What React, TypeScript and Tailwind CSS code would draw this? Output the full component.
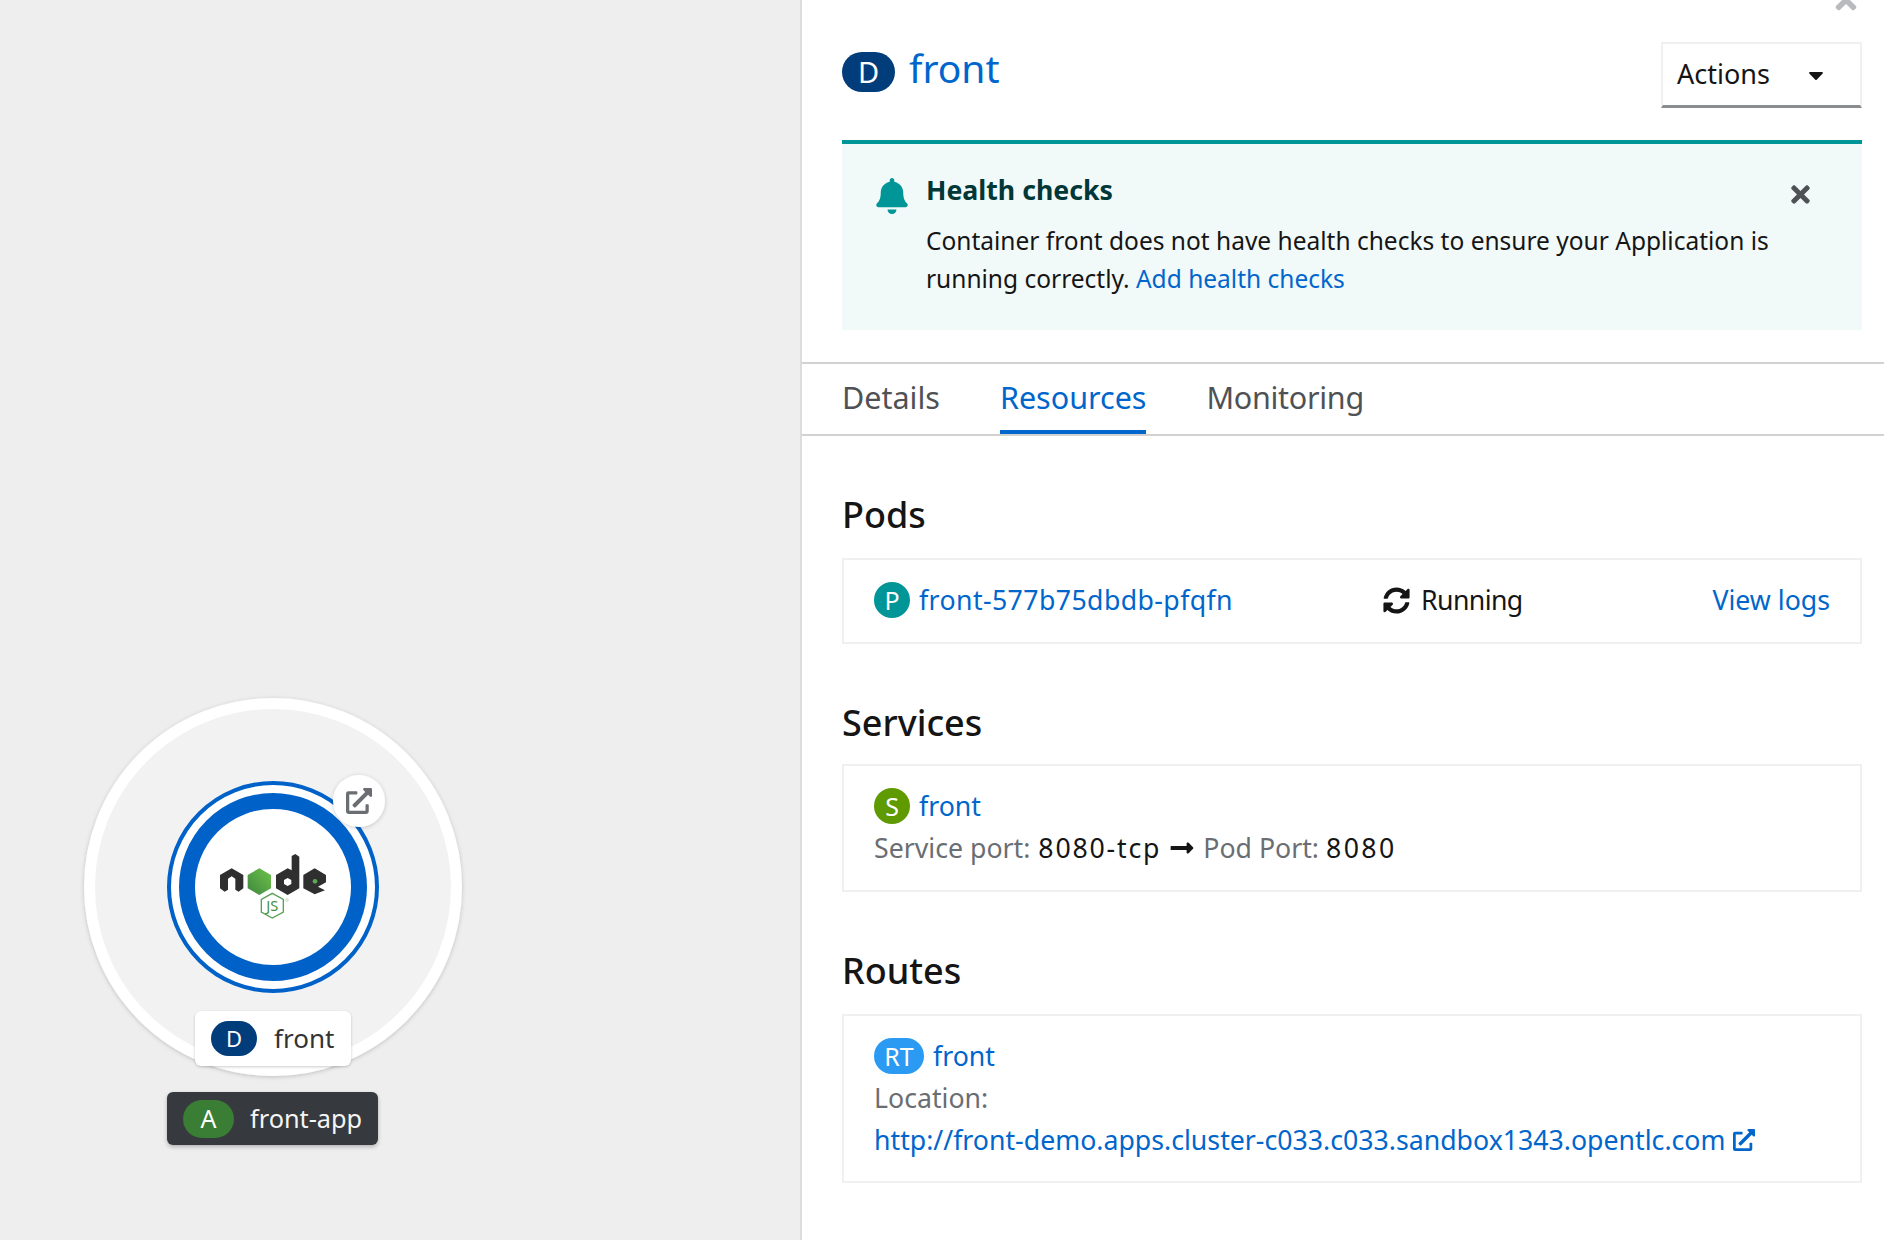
import { FaBell, FaCaretDown, FaExternalLinkAlt, FaLongArrowAltRight, FaSyncAlt, FaTimes } from 'react-icons/fa';

function Badge({ text, className }: { text: string; className: string }) {
  return (
    <span className={`flex shrink-0 items-center justify-center rounded-full text-white ${className}`}>{text}</span>
  );
}

function NodeLogo() {
  // drawn in pixels of the page, offset to the crop the logo was measured from
  return (
    <g transform="translate(190 780) scale(0.3333)">
      <defs>
        <linearGradient id="nodeHex" x1="0" y1="1" x2="1" y2="0">
          <stop offset="0" stopColor="#3f873f" />
          <stop offset="1" stopColor="#6cc24a" />
        </linearGradient>
      </defs>
      <path
        fill="#2f2f2f"
        d="M90 285 L125 265 L160 285 L160 325 L146 335 L136 329 L136 296 L125 289 L114 296 L114 329 L104 335 L90 325 Z"
      />
      <path fill="url(#nodeHex)" d="M208 265 L243 285 L243 325 L208 345 L173 325 L173 285 Z" />
      <path
        fill="#2f2f2f"
        fillRule="evenodd"
        d="M258 285 L293 265 L305 271 L305 228 L316 222 L328 230 L328 325 L293 345 L258 325 Z M293 294 L282 300 L282 312 L293 318 L304 312 L304 300 Z"
      />
      <path fill="#2f2f2f" d="M340 285 L374 265 L408 285 L408 307 L384 320 L405 331 L374 343 L340 325 Z" />
      <circle cx="375" cy="304" r="7" fill="#5ca65a" />
      <path fill="none" stroke="#5a9f54" strokeWidth="4" d="M247 340 L280 358 L280 396 L247 414 L214 396 L214 358 Z" />
      <text x="247" y="393" textAnchor="middle" fontFamily="'Noto Sans', sans-serif" fontSize="44" fill="#468f42">
        JS
      </text>
      <circle cx="291" cy="360" r="4" fill="none" stroke="#8fbf8a" strokeWidth="1.5" />
    </g>
  );
}

function Topology() {
  return (
    <div className="relative w-[800px] shrink-0 bg-[#eeeeee]">
      <svg className="absolute inset-0" width="800" height="1240" viewBox="0 0 800 1240">
        <defs>
          <filter id="soft" x="-20%" y="-20%" width="140%" height="140%">
            <feDropShadow dx="0" dy="1" stdDeviation="2" floodColor="#000" floodOpacity="0.2" />
          </filter>
        </defs>
        <circle cx="273" cy="887" r="183.5" fill="#f2f2f2" stroke="#fff" strokeWidth="11" filter="url(#soft)" />
        <circle cx="273" cy="887" r="104" fill="#fff" stroke="#0062c8" strokeWidth="4" />
        <circle cx="273" cy="887" r="86" fill="#fff" stroke="#0062c8" strokeWidth="16" />
        <NodeLogo />
        <circle cx="359" cy="801" r="26" fill="#fff" filter="url(#soft)" />
      </svg>
      <FaExternalLinkAlt className="absolute left-[346px] top-[788px] text-[26px] text-[#6a6e73]" />
      <div className="absolute left-[195px] top-[1011px] flex h-[55px] w-[156px] items-center rounded-[6px] bg-white pl-[16px] shadow-[0_1px_3px_rgba(0,0,0,0.2)]">
        <Badge text="D" className="h-[35px] w-[46px] bg-[#003d7a] text-[22px]" />
        <span className="ml-[17px] text-[26px] text-[#333]">front</span>
      </div>
      <div className="absolute left-[167px] top-[1092px] flex h-[53px] w-[211px] items-center rounded-[6px] bg-[#36393d] pl-[16px] shadow-[0_2px_4px_rgba(0,0,0,0.25)]">
        <Badge text="A" className="h-[38px] w-[51px] bg-[#3a7d34] text-[25px]" />
        <span className="ml-[16px] text-[25.3px] text-[#f5f5f5]">front-app</span>
      </div>
    </div>
  );
}

function SectionTitle({ text, className }: { text: string; className: string }) {
  return <h2 className={`h-[40px] text-[36px] leading-[40px] font-medium text-[#151515] ${className}`}>{text}</h2>;
}

function Details() {
  return (
    <div className="relative flex-1 border-l-2 border-[#dcdcdc] bg-white pr-[22px] pl-[40px] text-[26.7px] leading-[38px] text-[#151515]">
      <FaTimes className="absolute top-[-15px] left-[1029px] text-[30px] text-[#b8bbbe]" />

      <div className="flex h-[108px] items-end justify-between">
        <div className="mb-[16px] flex items-center gap-[14px] self-end">
          <Badge text="D" className="mt-[6px] h-[40px] w-[53px] bg-[#003d7a] text-[29px]" />
          <span className="mb-[2px] text-[39px] leading-[44px] text-[#0066cc]">front</span>
        </div>
        <div className="flex h-[66px] w-[201px] items-center justify-between border-2 border-b-[3px] border-[#f0f0f0] border-b-[#8a8d90] pr-[32px] pl-[14px] text-[27px]">
          <span className="-mt-[2px]">Actions</span>
          <FaCaretDown className="text-[24px]" />
        </div>
      </div>

      <div className="relative mt-[32px] h-[190px] border-t-4 border-[#009596] bg-[#f2f9f9] pt-[27px] pr-[60px] pl-[84px] text-[24.5px]">
        <FaBell className="absolute top-[34px] left-[32px] text-[36px] text-[#009596]" />
        <FaTimes className="absolute top-[37px] left-[945px] text-[27px] text-[#4f5255]" />
        <div className="text-[26.7px] font-bold text-[#003737]">Health checks</div>
        <p className="mt-[13px]">
          <span className="block">Container front does not have health checks to ensure your Application is</span>
          <span className="block">
            running correctly. <a className="text-[#0066cc]">Add health checks</a>
          </span>
        </p>
      </div>

      <div className="-mr-[22px] -ml-[40px] mt-[32px] flex h-[74px] gap-[60px] border-y-2 border-[#d2d2d2] pl-[40px] text-[30.5px] text-[#4f5255]">
        <span className="pt-[14px]">Details</span>
        <span className="border-b-[4px] border-[#0066cc] pt-[14px] text-[#0066cc]">Resources</span>
        <span className="pt-[14px] tracking-[-0.3px]">Monitoring</span>
      </div>

      <SectionTitle text="Pods" className="mt-[59px]" />
      <div className="mt-[23px] grid h-[86px] grid-cols-[509px_1fr_auto] items-center border-2 border-[#f0f0f0] pr-[30px] pb-[2px] pl-[30px]">
        <div className="flex items-center gap-[9px]">
          <Badge text="P" className="h-[36px] w-[36px] bg-[#009596] text-[25px]" />
          <a className="tracking-[0.4px] text-[#0066cc]">front-577b75dbdb-pfqfn</a>
        </div>
        <div className="flex items-center gap-[11px]">
          <FaSyncAlt className="text-[27px]" />
          <span className="tracking-[-0.6px]">Running</span>
        </div>
        <a className="text-[#0066cc]">View logs</a>
      </div>

      <SectionTitle text="Services" className="mt-[59px]" />
      <div className="mt-[21px] h-[128px] border-2 border-[#f0f0f0] pt-[22px] pl-[30px]">
        <div className="flex h-[36px] items-center gap-[9px]">
          <Badge text="S" className="h-[36px] w-[36px] bg-[#5e9a00] text-[25px]" />
          <a className="text-[#0066cc]">front</a>
        </div>
        <div className="mt-[5px] flex items-center">
          <span className="text-[#6a6e73]">Service port:</span>
          <span className="ml-[8px] tracking-[1.8px]">8080-tcp</span>
          <FaLongArrowAltRight className="mx-[8px] text-[26px]" />
          <span className="text-[#6a6e73]">Pod Port:</span>
          <span className="ml-[7px] tracking-[2.4px]">8080</span>
        </div>
      </div>

      <SectionTitle text="Routes" className="mt-[59px]" />
      <div className="mt-[23px] h-[169px] border-2 border-[#f0f0f0] pt-[22px] pl-[30px]">
        <div className="flex h-[36px] items-center gap-[9px]">
          <Badge text="RT" className="h-[36px] w-[50px] bg-[#2b9af3] text-[25px]" />
          <a className="text-[#0066cc]">front</a>
        </div>
        <div className="mt-[5px] text-[#6a6e73]">Location:</div>
        <a className="mt-[4px] flex items-center gap-[8px] text-[#0066cc]">
          http://front-demo.apps.cluster-c033.c033.sandbox1343.opentlc.com
          <FaExternalLinkAlt className="text-[22px]" />
        </a>
      </div>
    </div>
  );
}

export default function App() {
  return (
    <div className="flex h-[1240px] w-[1884px] overflow-hidden font-['Noto_Sans',sans-serif]">
      <Topology />
      <Details />
    </div>
  );
}
